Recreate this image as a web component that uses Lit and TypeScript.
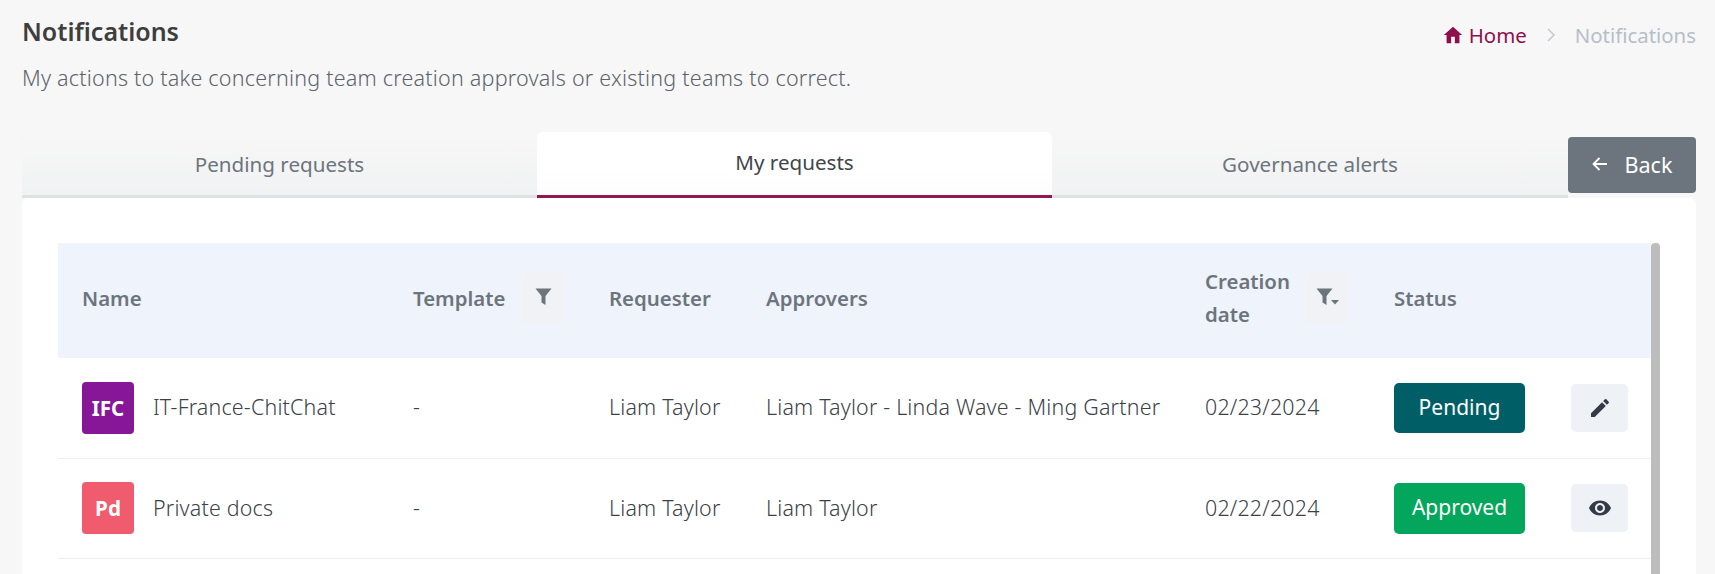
import { LitElement, html, css, svg } from "lit";
import { customElement } from "lit/decorators.js";

const filterIcon = svg`<path d="M0.5 0.5h16L10.5 8V17L6.5 14.5V8Z" fill="currentColor"/>`;
const rows = [
  { initials: "IFC", color: "#881798", name: "IT-France-ChitChat", approvers: "Liam Taylor - Linda Wave - Ming Gartner", date: "02/23/2024", status: "Pending", cls: "pending", icon: "edit" },
  { initials: "Pd", color: "#f05b6e", name: "Private docs", approvers: "Liam Taylor", date: "02/22/2024", status: "Approved", cls: "approved", icon: "eye" },
];

@customElement("app-root")
export class AppRoot extends LitElement {
  static styles = css`
    :host { display: block; height: 574px; overflow: hidden; background: #f7f7f7; font-family: "Noto Sans", "Lato", sans-serif; font-size: 20.6px; color: #40464b; }
    .head { height: 132px; padding: 0 19px 0 22px; box-sizing: border-box; display: flex; justify-content: space-between; align-items: flex-start; }
    h1 { margin: 15px 0 0; font-size: 25px; line-height: 32px; font-weight: 600; color: #3e3e3e; }
    .sub { margin: 17px 0 0; font-size: 21.5px; letter-spacing: 0.22px; line-height: 28px; color: #5c646b; font-weight: 300; }
    .crumbs { display: flex; align-items: center; margin-top: 21px; line-height: 28px; font-size: 20.4px; }
    .crumbs .home { color: #8f0f4d; display: flex; align-items: center; gap: 5px; }
    .crumbs .sep { margin: 0 19px; display: flex; }
    .crumbs .cur { color: #b6bec9; }
    .tabsrow { display: flex; height: 66px; padding: 0 19px 0 22px; }
    .tabs { flex: 1; display: flex; }
    .tab { flex: 0 0 515px; box-sizing: border-box; display: flex; align-items: center; justify-content: center; color: #6c757d; border-bottom: 3px solid #dee1e3; background: linear-gradient(#f7f7f7, #f1f2f3); }
    .tab:last-child { flex: 1; }
    .tab.active { background: linear-gradient(#fff 60%, #fcfcfc); color: #40464b; border-bottom-color: #931650; border-radius: 6px 6px 0 0; padding-bottom: 3px; }
    .back { width: 128px; height: 56px; margin-top: 5px; box-sizing: border-box; padding-bottom: 2px; background: #6c757d; color: #fff; border-radius: 4px; display: flex; align-items: center; justify-content: center; gap: 15px; font-size: 21.6px; }
    .card { margin: 0 19px 0 22px; height: 376px; box-sizing: border-box; background: #fff; border-radius: 6px 6px 0 0; padding: 45px 36px 0 36px; display: flex; }
    .scroll { flex: none; width: 9px; background: #bdbdbd; border-radius: 4px 4px 0 0; }
    table { flex: none; width: 1593px; border-collapse: collapse; table-layout: fixed; align-self: flex-start; }
    th, td { padding: 0 0 0 24px; text-align: left; vertical-align: middle; box-sizing: border-box; }
    td { font-size: 21.4px; letter-spacing: 0.2px; font-weight: 300; color: #3c4147; }
    td.txt { padding-bottom: 2px; }
    thead tr { height: 115px; background: #eff3fb; }
    th { font-weight: 600; color: #6c757d; font-size: 20.4px; padding-bottom: 6px; }
    th.flt { padding-bottom: 4px; }
    tbody tr { height: 100px; border-bottom: 1px solid #eceff4; }
    .hcell { display: flex; align-items: center; }
    .date-label { width: 101px; line-height: 33px; margin-bottom: 2px; }
    .tpl-label { width: 109px; margin-bottom: 2px; }
    .fbtn { width: 42px; height: 52px; background: #f0f2f6; border-radius: 4px; display: flex; align-items: center; justify-content: center; color: #6c757d; padding-bottom: 4px; box-sizing: border-box; }
    .namecell { display: flex; align-items: center; gap: 19px; }
    .nm { margin-bottom: 2px; }
    .av { width: 52px; height: 52px; border-radius: 4px; color: #fff; font-weight: 700; font-size: 20.6px; letter-spacing: 0; display: flex; align-items: center; justify-content: center; }
    .pill { width: 131px; height: 50px; box-sizing: border-box; padding-bottom: 2px; border-radius: 5px; color: #fff; font-size: 21px; letter-spacing: 0; font-weight: 400; display: flex; align-items: center; justify-content: center; }
    .pending { background: #005f66; }
    .approved { background: #03a65a; height: 51px; }
    .act { width: 57px; height: 48px; background: #eef1f6; border-radius: 5px; display: flex; align-items: center; justify-content: center; color: #343a46; }
  `;

  render() {
    return html`
      <div class="head">
        <div>
          <h1>Notifications</h1>
          <p class="sub">My actions to take concerning team creation approvals or existing teams to correct.</p>
        </div>
        <div class="crumbs">
          <span class="home"><svg width="22" height="22" viewBox="0 0 24 24" fill="currentColor"><path d="M10 21v-7h4v7h5v-9h3L12 3 2 12h3v9z"/></svg>Home</span>
          <span class="sep"><svg width="10" height="16" viewBox="0 0 10 16" fill="none" stroke="#c3cad3" stroke-width="1.5"><path d="M2 2l6 6-6 6"/></svg></span>
          <span class="cur">Notifications</span>
        </div>
      </div>
      <div class="tabsrow">
        <div class="tabs">
          <div class="tab">Pending requests</div>
          <div class="tab active">My requests</div>
          <div class="tab">Governance alerts</div>
        </div>
        <div class="back"><svg width="18" height="18" viewBox="0 0 18 18" fill="none" stroke="currentColor" stroke-width="1.8"><path d="M16 9H3M8.5 3L2.5 9l6 6"/></svg>Back</div>
      </div>
      <div class="card">
        <table>
          <colgroup><col style="width:331px"><col style="width:196px"><col style="width:157px"><col style="width:439px"><col style="width:189px"><col style="width:177px"><col style="width:104px"></colgroup>
          <thead><tr>
            <th>Name</th>
            <th class="flt"><div class="hcell"><span class="tpl-label">Template</span><span class="fbtn"><svg width="17" height="18" viewBox="0 0 17 18">${filterIcon}</svg></span></div></th>
            <th>Requester</th>
            <th>Approvers</th>
            <th class="flt"><div class="hcell"><span class="date-label">Creation date</span><span class="fbtn"><svg width="23" height="18" viewBox="0 0 23 18">${filterIcon}<path d="M15 12h8L19 16.5z" fill="currentColor"/></svg></span></div></th>
            <th>Status</th>
            <th></th>
          </tr></thead>
          <tbody>
            ${rows.map((r) => html`<tr>
              <td><div class="namecell"><span class="av" style="background:${r.color}">${r.initials}</span><span class="nm">${r.name}</span></div></td>
              <td class="txt">-</td>
              <td class="txt">Liam Taylor</td>
              <td class="txt">${r.approvers}</td>
              <td class="txt">${r.date}</td>
              <td><div class="pill ${r.cls}">${r.status}</div></td>
              <td><div class="act">${r.icon === "edit"
                ? html`<svg width="24" height="24" viewBox="0 0 24 24" fill="currentColor"><path d="M3 17.25V21h3.75L17.81 9.94l-3.75-3.75L3 17.25zM20.71 7.04a1 1 0 0 0 0-1.41l-2.34-2.34a1 1 0 0 0-1.41 0l-1.83 1.83 3.75 3.75 1.83-1.83z"/></svg>`
                : html`<svg width="24" height="24" viewBox="0 0 24 24" fill="currentColor"><path d="M12 4.5C7 4.5 2.73 7.61 1 12c1.73 4.39 6 7.5 11 7.5s9.27-3.11 11-7.5c-1.73-4.39-6-7.5-11-7.5zM12 17c-2.76 0-5-2.24-5-5s2.24-5 5-5 5 2.24 5 5-2.24 5-5 5zm0-8c-1.66 0-3 1.34-3 3s1.34 3 3 3 3-1.34 3-3-1.34-3-3-3z"/></svg>`}</div></td>
            </tr>`)}
          </tbody>
        </table>
        <div class="scroll"></div>
      </div>
    `;
  }
}
